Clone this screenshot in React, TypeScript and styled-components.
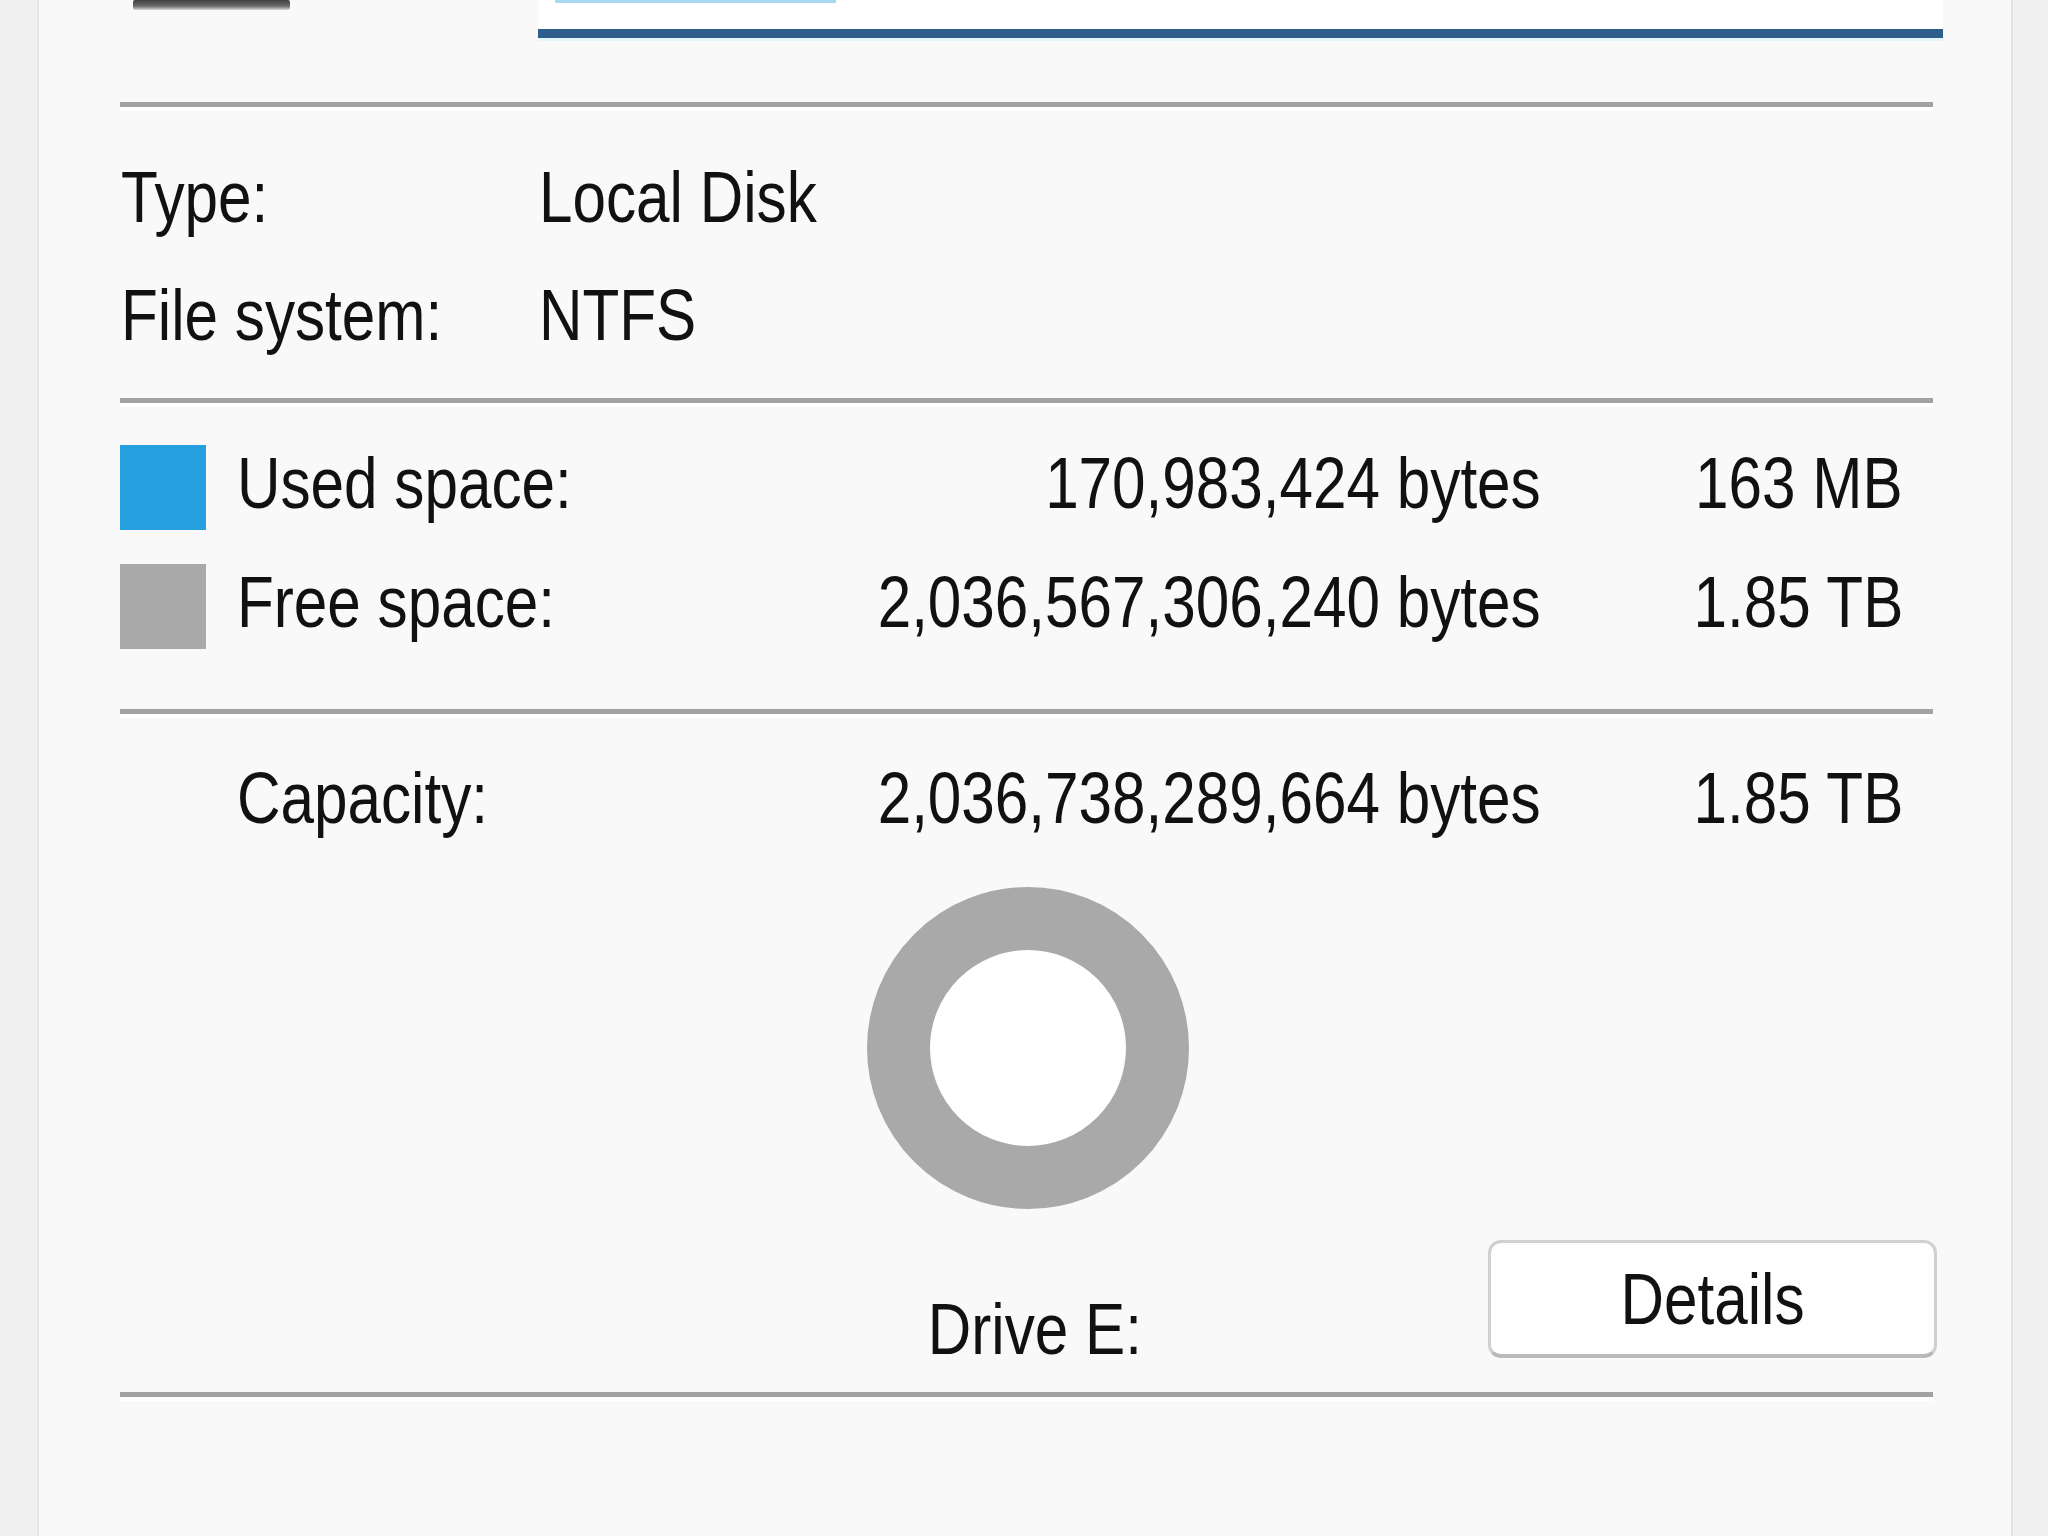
import React from "react";
import styled, { createGlobalStyle } from "styled-components";

const GlobalStyle = createGlobalStyle`
  html, body { margin: 0; padding: 0; background: #f0f0f0; }
  * { box-sizing: border-box; }
`;

const Page = styled.div`
  width: 2048px;
  height: 1536px;
  display: flex;
  background: #f0f0f0;
  overflow: hidden;
  font-family: "Liberation Sans", Arial, sans-serif;
  font-size: 73px;
  line-height: 80px;
  color: #111111;
`;

const Panel = styled.div`
  margin-left: 37px;
  width: 1976px;
  height: 1536px;
  background: #f9f9f9;
  border-left: 2px solid #e4e4e4;
  border-right: 2px solid #e1e1e1;
  padding: 0 78px 0 81px;
  display: flex;
  flex-direction: column;
`;

/* Dialog text is tall and narrow (Segoe UI stretched); condense it horizontally */
const Text = styled.span<{ $origin?: "left" | "right" | "center" }>`
  display: inline-block;
  white-space: nowrap;
  transform: scaleX(0.825);
  transform-origin: ${(p) => p.$origin ?? "left"} center;
`;

const TopRow = styled.div`
  display: flex;
  align-items: flex-start;
  height: 38px;
`;

const DriveIconStub = styled.svg`
  margin-left: 13px;
  flex-shrink: 0;
`;

const NameField = styled.div`
  margin-left: 248px;
  width: 1405px;
  height: 38px;
  flex-shrink: 0;
  background: #ffffff;
  border-bottom: 9px solid #2d5e8c;
  box-shadow: 0 3px 0 #e4f4fb;
`;

const Selection = styled.div`
  margin-left: 17px;
  width: 281px;
  height: 3px;
  background: #a8d9f2;
`;

const Separator = styled.div<{ $mt: number }>`
  margin-top: ${(p) => p.$mt}px;
  height: 9px;
  flex-shrink: 0;
  background: #a2a2a2;
  border-bottom: 4px solid #ffffff;
`;

const InfoGrid = styled.div`
  margin-top: 46px;
  display: grid;
  grid-template-columns: 418px 1fr;
  row-gap: 38px;
  padding-left: 1px;
`;

const SpaceRow = styled.div<{ $mt: number }>`
  margin-top: ${(p) => p.$mt}px;
  display: grid;
  grid-template-columns: 117px 1fr auto 362px;
  align-items: start;
  padding-right: 30px;
  white-space: nowrap;
`;

const Swatch = styled.div<{ $color: string }>`
  width: 86px;
  height: 85px;
  margin-top: 2px;
  background: ${(p) => p.$color};
`;

const Right = styled.div`
  text-align: right;
`;

const DonutWrap = styled.div`
  margin-top: 49px;
  align-self: center;
  width: 322px;
  height: 322px;
  margin-left: 2px;
`;

const Footer = styled.div`
  margin-top: 31px;
  height: 129px;
  display: grid;
  grid-template-columns: 1fr auto 1fr;
`;

const DriveLabel = styled.div`
  grid-column: 2;
  align-self: end;
  padding-left: 16px;
  white-space: nowrap;
`;

const DetailsButton = styled.button`
  grid-column: 3;
  justify-self: end;
  align-self: start;
  margin-right: -4px;
  width: 449px;
  height: 118px;
  padding: 0;
  background: #fefefe;
  border: 3px solid #d0d0d0;
  border-bottom: 4px solid #b9b9b9;
  border-radius: 13px;
  font: inherit;
  color: inherit;
  line-height: 80px;
`;

export default function App() {
  return (
    <>
      <GlobalStyle />
      <Page>
        <Panel>
          <TopRow>
            <DriveIconStub width="157" height="10" viewBox="0 0 157 10">
              <defs>
                <linearGradient id="drv" x1="0" y1="0" x2="0" y2="1">
                  <stop offset="0" stopColor="#3f3f3f" />
                  <stop offset="0.6" stopColor="#6a6a6a" />
                  <stop offset="1" stopColor="#d8d8d8" />
                </linearGradient>
              </defs>
              <rect x="0" y="0" width="157" height="10" rx="2" fill="url(#drv)" />
            </DriveIconStub>
            <NameField>
              <Selection />
            </NameField>
          </TopRow>

          <Separator $mt={64} />

          <InfoGrid>
            <div><Text>Type:</Text></div>
            <div><Text>Local Disk</Text></div>
            <div><Text>File system:</Text></div>
            <div><Text>NTFS</Text></div>
          </InfoGrid>

          <Separator $mt={43} />

          <SpaceRow $mt={36}>
            <Swatch $color="#26a0df" />
            <div><Text>Used space:</Text></div>
            <Right><Text $origin="right">170,983,424 bytes</Text></Right>
            <Right><Text $origin="right">163 MB</Text></Right>
          </SpaceRow>
          <SpaceRow $mt={32}>
            <Swatch $color="#a9a9a9" />
            <div><Text>Free space:</Text></div>
            <Right><Text $origin="right">2,036,567,306,240 bytes</Text></Right>
            <Right><Text $origin="right">1.85 TB</Text></Right>
          </SpaceRow>

          <Separator $mt={60} />

          <SpaceRow $mt={40}>
            <div />
            <div><Text>Capacity:</Text></div>
            <Right><Text $origin="right">2,036,738,289,664 bytes</Text></Right>
            <Right><Text $origin="right">1.85 TB</Text></Right>
          </SpaceRow>

          <DonutWrap>
            <svg width="322" height="322" viewBox="0 0 322 322">
              <circle cx="161" cy="161" r="98" fill="#ffffff" />
              <circle cx="161" cy="161" r="129.5" fill="none" stroke="#a9a9a9" strokeWidth="63" />
            </svg>
          </DonutWrap>

          <Footer>
            <DriveLabel><Text $origin="center">Drive E:</Text></DriveLabel>
            <DetailsButton><Text $origin="center">Details</Text></DetailsButton>
          </Footer>

          <Separator $mt={23} />
        </Panel>
      </Page>
    </>
  );
}
